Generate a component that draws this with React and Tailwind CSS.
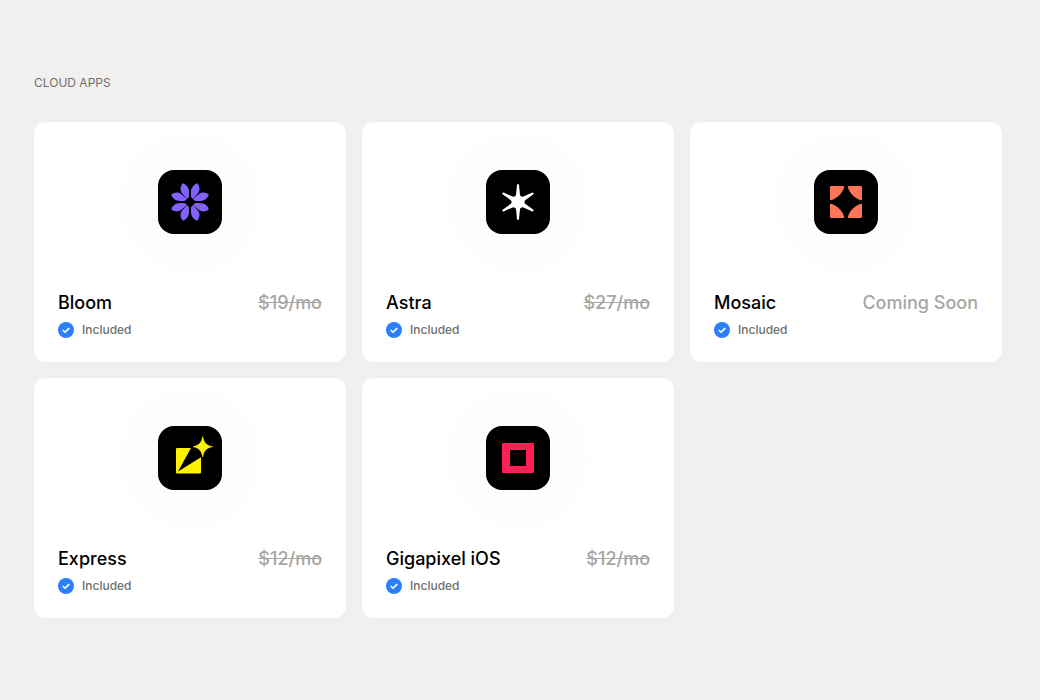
const petal = "M39.2 13.2C35.8 14.4 33 17.6 33 22V26.2Q33.4 28.4 35.2 28.8L36.6 27.2L39.8 23.4C42.4 20 41.8 16.4 39.2 13.2Z";

const BloomIcon = () => (
  <svg viewBox="0 0 64 64" className="size-16" fill="#8162ff" aria-hidden="true">
    {[0, 90, 180, 270].map((angle) => (
      <g key={angle} transform={`rotate(${angle} 32 32)`}>
        <path d={petal} />
        <path transform="matrix(0 -1 -1 0 64 64)" d={petal} />
      </g>
    ))}
  </svg>
);

const AstraIcon = () => (
  <svg viewBox="0 0 64 64" className="size-16" fill="#fff" aria-hidden="true">
    {[0, 60, 120, 180, 240, 300].map((angle) => (
      <path
        key={angle}
        transform={`rotate(${angle} 32 32)`}
        d="M31 14.8Q32 13.2 33 14.8L33.9 24Q34.1 26.4 35.4 26.3L32 32L28.6 26.3Q29.9 26.4 30.1 24Z"
      />
    ))}
    <circle cx="32" cy="32" r="5.8" />
  </svg>
);

const MosaicIcon = () => (
  <svg viewBox="0 0 64 64" className="size-16" fill="#ff7557" aria-hidden="true">
    {[0, 90, 180, 270].map((angle) => (
      <path
        key={angle}
        transform={`rotate(${angle} 32 32)`}
        d="M17.2 16H29.4Q30.4 16 30.2 17C28.6 23 23 28.6 17 30.2Q16 30.4 16 29.4V17.2Q16 16 17.2 16Z"
      />
    ))}
  </svg>
);

const ExpressIcon = () => (
  <svg viewBox="0 0 64 64" className="size-16" aria-hidden="true">
    <rect x="18" y="22" width="25" height="25.5" rx="1" fill="#fff200" />
    <path d="M20 45.5L33 22V18H46V30L43 31.3Z" fill="#000" />
    <path
      d="M44.7 10.5C46 17 48.4 19.4 54.5 20.7C48.4 22 46 24.4 44.7 31C43.4 24.4 41 22 35 20.7C41 19.4 43.4 17 44.7 10.5Z"
      fill="#fff200"
      stroke="#fff200"
      strokeWidth="0.5"
    />
  </svg>
);

const GigapixelIcon = () => (
  <svg viewBox="0 0 64 64" className="size-16" fill="#ff1f55" aria-hidden="true">
    <path fillRule="evenodd" d="M17 17H47Q48 17 48 18V46Q48 47 47 47H17Q16 47 16 46V18Q16 17 17 17ZM24 24V40H40V24Z" />
  </svg>
);

const CheckBadge = () => (
  <svg viewBox="0 0 16 16" className="size-4 shrink-0" aria-hidden="true">
    <circle cx="8" cy="8" r="8" fill="#2b7fff" />
    <path d="M4.7 8L7 10.1L11.3 6.1" fill="none" stroke="#fff" strokeWidth="1.6" />
  </svg>
);

const apps = [
  { name: "Bloom", price: "$19/mo", Icon: BloomIcon },
  { name: "Astra", price: "$27/mo", Icon: AstraIcon },
  { name: "Mosaic", comingSoon: true, Icon: MosaicIcon },
  { name: "Express", price: "$12/mo", Icon: ExpressIcon },
  { name: "Gigapixel iOS", price: "$12/mo", Icon: GigapixelIcon },
];

const AppCard = ({ name, price, comingSoon, Icon }) => (
  <li className="flex flex-col rounded-xl bg-white px-6 pt-2 pb-5">
    <div className="mx-auto flex size-36 items-center justify-center rounded-full bg-[radial-gradient(closest-side,#fbfbfb,#fefefe)]">
      <div className="size-16 overflow-hidden rounded-2xl bg-black">
        <Icon />
      </div>
    </div>
    <div className="mt-4 flex items-center justify-between text-lg leading-[26px] font-medium">
      <h3 className="text-black">{name}</h3>
      {comingSoon ? (
        <span className="text-[#a8a6a2]">Coming Soon</span>
      ) : (
        <s className="text-[#a8a6a2]">{price}</s>
      )}
    </div>
    <div className="mt-1.5 mb-1 flex items-center gap-2 text-xs leading-4 font-medium text-[#6f6e6b]">
      <CheckBadge />
      <span>Included</span>
    </div>
  </li>
);

const App = () => {
  return (
    <main className="min-h-screen bg-[#f1f0ee] pt-[75px] pr-[38px] pb-16 pl-[34px] font-['Inter',sans-serif]">
      <h2 className="text-xs leading-4 text-[#6f6e6b]">CLOUD APPS</h2>
      <ul className="mt-[31px] grid grid-cols-3 gap-4">
        {apps.map((app) => (
          <AppCard key={app.name} {...app} />
        ))}
      </ul>
    </main>
  );
};

export default App;
